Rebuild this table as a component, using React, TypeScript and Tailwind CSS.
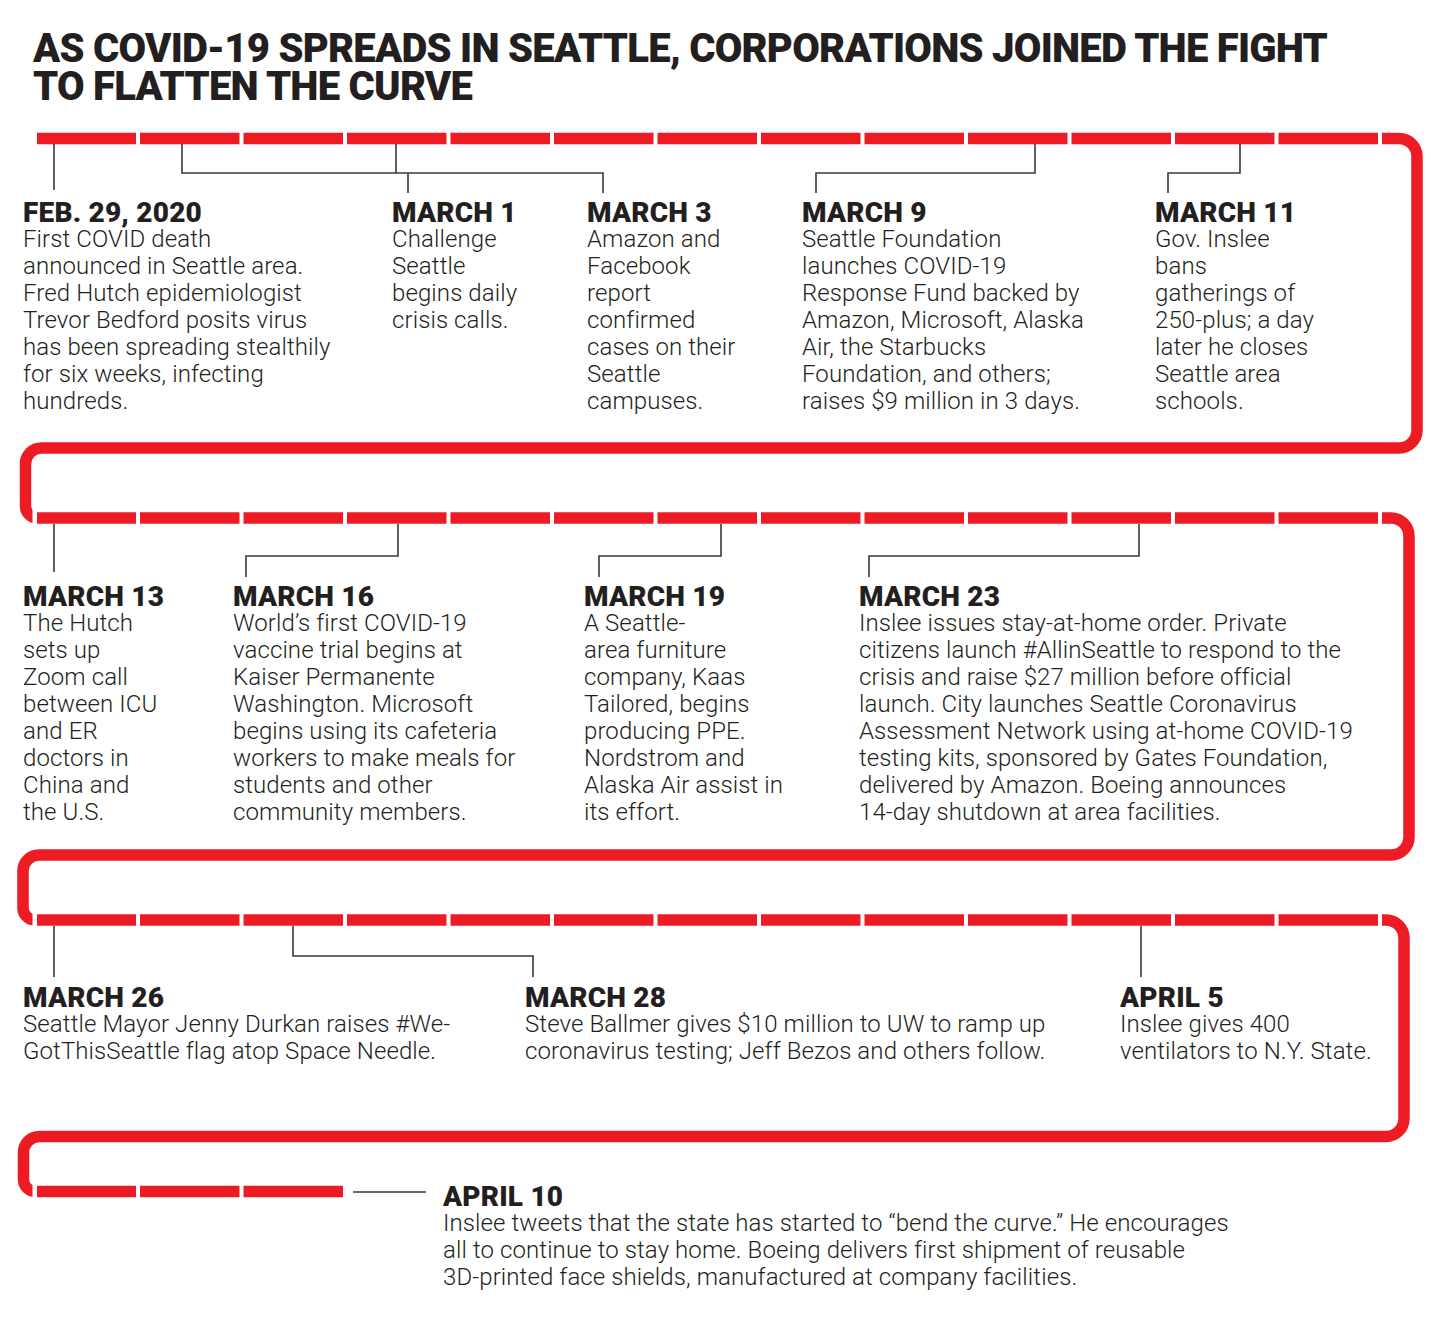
import * as React from "react";

type Entry = {
    date: string;
    lines: string[];
    width?: string;
};

const rowOne: Entry[] = [
    {
        date: "FEB. 29, 2020",
        width: "w-[369px]",
        lines: [
            "First COVID death",
            "announced in Seattle area.",
            "Fred Hutch epidemiologist",
            "Trevor Bedford posits virus",
            "has been spreading stealthily",
            "for six weeks, infecting",
            "hundreds.",
        ],
    },
    {
        date: "MARCH 1",
        width: "w-[195px]",
        lines: ["Challenge", "Seattle", "begins daily", "crisis calls."],
    },
    {
        date: "MARCH 3",
        width: "w-[215px]",
        lines: ["Amazon and", "Facebook", "report", "confirmed", "cases on their", "Seattle", "campuses."],
    },
    {
        date: "MARCH 9",
        width: "w-[353px]",
        lines: [
            "Seattle Foundation",
            "launches COVID-19",
            "Response Fund backed by",
            "Amazon, Microsoft, Alaska",
            "Air, the Starbucks",
            "Foundation, and others;",
            "raises $9 million in 3 days.",
        ],
    },
    {
        date: "MARCH 11",
        lines: ["Gov. Inslee", "bans", "gatherings of", "250-plus; a day", "later he closes", "Seattle area", "schools."],
    },
];

const rowTwo: Entry[] = [
    {
        date: "MARCH 13",
        width: "w-[210px]",
        lines: ["The Hutch", "sets up", "Zoom call", "between ICU", "and ER", "doctors in", "China and", "the U.S."],
    },
    {
        date: "MARCH 16",
        width: "w-[351px]",
        lines: [
            "World’s first COVID-19",
            "vaccine trial begins at",
            "Kaiser Permanente",
            "Washington. Microsoft",
            "begins using its cafeteria",
            "workers to make meals for",
            "students and other",
            "community members.",
        ],
    },
    {
        date: "MARCH 19",
        width: "w-[275px]",
        lines: [
            "A Seattle-",
            "area furniture",
            "company, Kaas",
            "Tailored, begins",
            "producing PPE.",
            "Nordstrom and",
            "Alaska Air assist in",
            "its effort.",
        ],
    },
    {
        date: "MARCH 23",
        lines: [
            "Inslee issues stay-at-home order. Private",
            "citizens launch #AllinSeattle to respond to the",
            "crisis and raise $27 million before official",
            "launch. City launches Seattle Coronavirus",
            "Assessment Network using at-home COVID-19",
            "testing kits, sponsored by Gates Foundation,",
            "delivered by Amazon. Boeing announces",
            "14-day shutdown at area facilities.",
        ],
    },
];

const rowThree: Entry[] = [
    {
        date: "MARCH 26",
        width: "w-[502px]",
        lines: ["Seattle Mayor Jenny Durkan raises #We-", "GotThisSeattle flag atop Space Needle."],
    },
    {
        date: "MARCH 28",
        width: "w-[595px]",
        lines: [
            "Steve Ballmer gives $10 million to UW to ramp up",
            "coronavirus testing; Jeff Bezos and others follow.",
        ],
    },
    {
        date: "APRIL 5",
        lines: ["Inslee gives 400", "ventilators to N.Y. State."],
    },
];

const lastEntry: Entry = {
    date: "APRIL 10",
    lines: [
        "Inslee tweets that the state has started to “bend the curve.” He encourages",
        "all to continue to stay home. Boeing delivers first shipment of reusable",
        "3D-printed face shields, manufactured at company facilities.",
    ],
};

const EventBlock = ({entry}: { entry: Entry }) => {
    return (
        <div className={`shrink-0 ${entry.width ?? ""}`}>
            <h3 className="whitespace-nowrap text-[28px] leading-[26px] font-black tracking-[0.2px]">
                {entry.date}
            </h3>
            <p className="text-[24px] leading-[27px] font-light tracking-[0.1px]">
                {entry.lines.map((line) => (
                    <span key={line} className="block whitespace-nowrap">
                        {line}
                    </span>
                ))}
            </p>
        </div>
    );
};

// red dashes: 99px dash, ~4.5px gap, starting at x=37
const gapXs = Array.from({length: 13}, (_, k) => 136 + k * 103.5);

const Snake = () => {
    const red = "#ed1c24";
    const ink = "#3b3838";
    const snake =
        "M37 138.5 H1399 A18 18 0 0 1 1417 156.5 V430 A18 18 0 0 1 1399 448 H41.5 A16 16 0 0 0 25.5 464 V506 A12 12 0 0 0 37.5 518 " +
        "H1391 A18 18 0 0 1 1409 536 V837 A18 18 0 0 1 1391 855 H39 A16 16 0 0 0 23 871 V908 A12 12 0 0 0 35 920 " +
        "H1386 A18 18 0 0 1 1404 938 V1118.5 A18 18 0 0 1 1386 1136.5 H39.5 A16 16 0 0 0 23.5 1152.5 V1179.5 A12 12 0 0 0 35.5 1191.5 H343";
    const rows = [138.5, 518, 920];
    return (
        <svg className="absolute inset-0" width="1440" height="1329" viewBox="0 0 1440 1329" aria-hidden>
            <path d={snake} fill="none" stroke={red} strokeWidth="11.5"/>
            {rows.map((y) =>
                gapXs.map((x) => <rect key={`${y}-${x}`} x={x} y={y - 8} width="4" height="16" fill="#fff"/>)
            )}
            {gapXs.slice(0, 2).map((x) => <rect key={`last-${x}`} x={x} y={1183} width="4" height="16" fill="#fff"/>)}
            {[518, 920, 1191.5].map((y) => <rect key={`l-${y}`} x="32.5" y={y - 10} width="4.5" height="20" fill="#fff"/>)}

            <g fill="none" stroke={ink} strokeWidth="1.6">
                {/* row 1 */}
                <path d="M54 144 V190"/>
                <path d="M182 144 V173 H603 V193"/>
                <path d="M396 144 V173"/>
                <path d="M408 173 V193"/>
                <path d="M1035 144 V173 H816 V193"/>
                <path d="M1240 144 V173 H1168 V193"/>
                {/* row 2 */}
                <path d="M54 524 V572"/>
                <path d="M398 524 V556 H246 V577"/>
                <path d="M721 524 V556 H599 V577"/>
                <path d="M1139 524 V556 H869 V577"/>
                {/* row 3 */}
                <path d="M54 926 V977"/>
                <path d="M293 926 V956 H533 V977"/>
                <path d="M1141 926 V977"/>
                {/* row 4 */}
                <path d="M353 1192 H426"/>
            </g>
        </svg>
    );
};

export default function App() {
    return (
        <div className="relative w-[1440px] h-[1329px] overflow-hidden bg-white text-[#231f20] font-[Roboto,'Liberation_Sans',sans-serif]">
            <Snake/>
            <div className="relative">
                <h1 className="pl-[33px] pt-[30px] text-[40px] leading-[38px] font-black tracking-[-0.75px]">
                    <span className="block whitespace-nowrap">
                        AS COVID-19 SPREADS IN SEATTLE, CORPORATIONS JOINED THE FIGHT
                    </span>
                    <span className="block whitespace-nowrap">TO FLATTEN THE CURVE</span>
                </h1>

                <section className="mt-[94px] flex items-start pl-[23px]">
                    {rowOne.map((entry) => (
                        <EventBlock key={entry.date} entry={entry}/>
                    ))}
                </section>

                <section className="mt-[169px] flex items-start pl-[23px]">
                    {rowTwo.map((entry) => (
                        <EventBlock key={entry.date} entry={entry}/>
                    ))}
                </section>

                <section className="mt-[159px] flex items-start pl-[23px]">
                    {rowThree.map((entry) => (
                        <EventBlock key={entry.date} entry={entry}/>
                    ))}
                </section>

                <section className="mt-[119px] flex items-start pl-[443px]">
                    <EventBlock entry={lastEntry}/>
                </section>
            </div>
        </div>
    );
}
